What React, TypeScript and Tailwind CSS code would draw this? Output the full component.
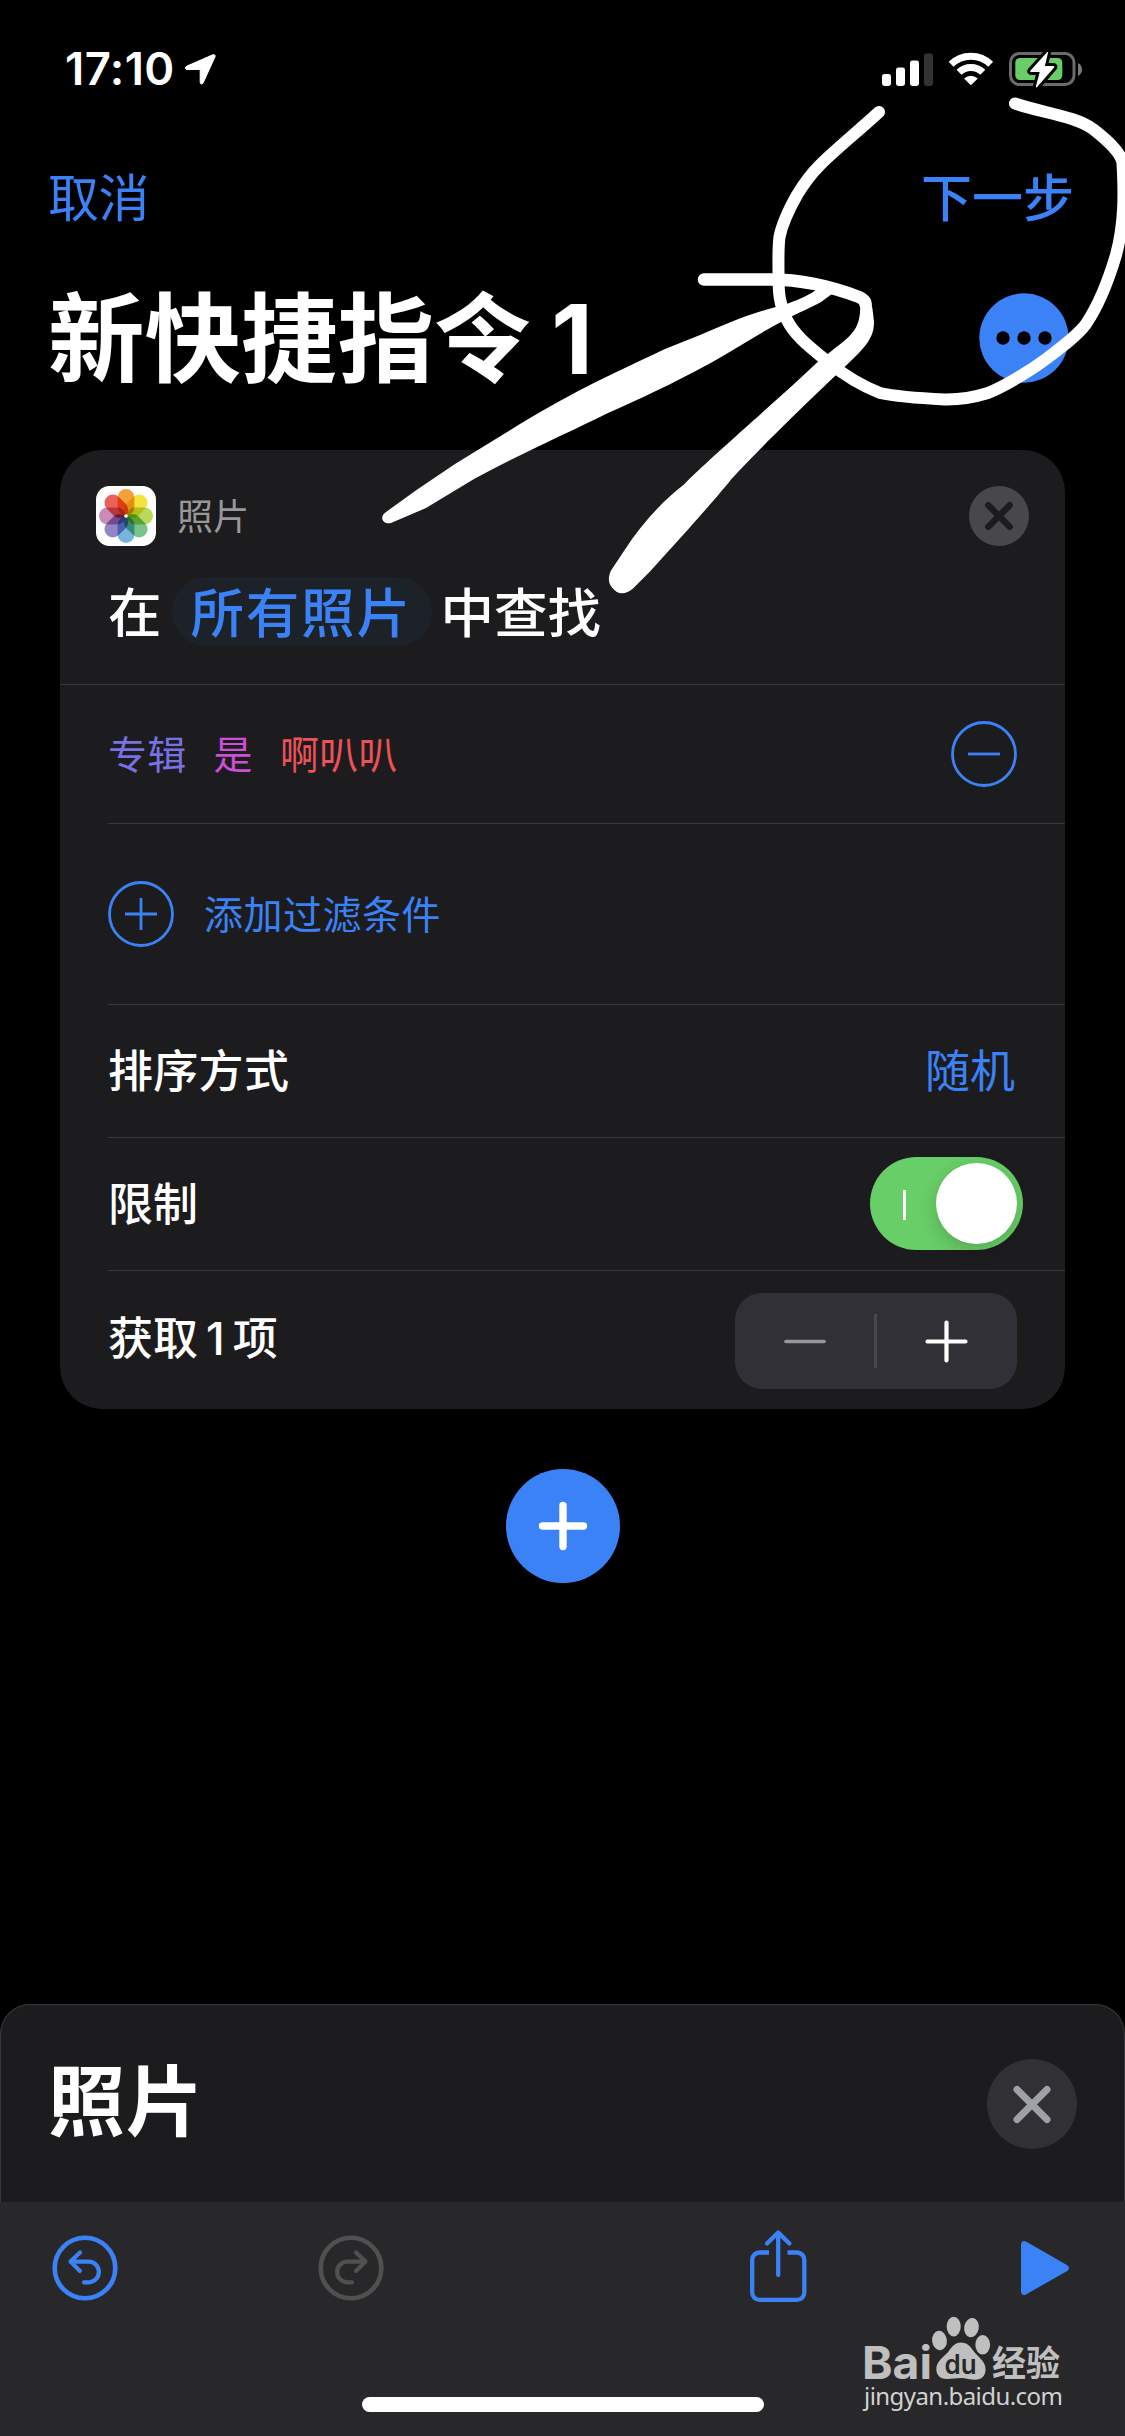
import type { ReactNode } from "react";
import clsx from "clsx";

const PETALS = [
  "#f2a03c",
  "#f3e33c",
  "#b9d85f",
  "#78c28c",
  "#78b4e0",
  "#9486c6",
  "#c98bb8",
  "#e8625a",
];

function StatusBar() {
  return (
    <div className="flex h-[138px] items-center justify-between pl-[65px] pr-[42px]">
      <div className="flex items-center gap-[11px]">
        <span className="w-[109px] whitespace-nowrap text-[45.5px] leading-none font-semibold tracking-[0.4px]">
          17:10
        </span>
        <svg width="31" height="31" viewBox="0 0 31 31" fill="#fff" stroke="#fff" strokeWidth="1" strokeLinejoin="round">
          <path d="M27.8.8 1.4 12.3C-.1 13.100.2 15.500 1.900 15.500H13.900c1 0 1.300.3 1.300 1.300V28.300c0 2 2.100 2.300 2.900.6L30.100 2.600C30.600 1.300 29.200.2 27.800.8Z" />
        </svg>
      </div>
      <div className="flex items-center">
        <svg width="51" height="33" viewBox="0 0 51 33" fill="#fff">
          <rect x="0" y="21" width="9" height="12" rx="2.4" />
          <rect x="14" y="14.500" width="9" height="18.500" rx="2.4" />
          <rect x="28" y="7.500" width="9" height="25.500" rx="2.4" />
          <rect x="42" y="0.500" width="9" height="32.500" rx="2.4" fill="#333" />
        </svg>
        <svg className="ml-[15.5px]" width="46" height="34" viewBox="0 0 46 34">
          <g fill="none" stroke="#fff" strokeWidth="7">
            <path d="M3.100 12.300a28.300 28.300 0 0 1 39.600 0" />
            <path d="M11 20.300a17 17 0 0 1 23.800 0" />
          </g>
          <path d="M22.900 33.200 16 26.400q6.900-5.300 13.800 0Z" fill="#fff" />
        </svg>
        <svg className="ml-[15px]" width="74" height="38" viewBox="0 0 74 38">
          <rect x="1.500" y="3.500" width="63.500" height="31" rx="9" fill="none" stroke="#6b6b6b" strokeWidth="3" />
          <path d="M69 13c5.300 2.500 5.300 10.500 0 13Z" fill="#7b7b7b" />
          <rect x="6.300" y="8" width="47" height="22" rx="4.500" fill="#69ce68" />
          <path
            d="M38 2.300 21.500 20.500c-.6.8-.2 1.500.7 1.500h8.500l-3.800 14.500c-.2 1 .6 1.300 1.200.6l17-19.600c.6-.8.200-1.500-.7-1.500h-8.500L39 2.700c.2-.8-.5-1-1-.4Z"
            fill="#fff"
            stroke="#000"
            strokeWidth="6"
            strokeLinejoin="round"
            paintOrder="stroke"
          />
        </svg>
      </div>
    </div>
  );
}

function PhotosIcon() {
  return (
    <svg width="60" height="60" viewBox="0 0 60 60" className="isolate">
      <rect width="60" height="60" rx="13.500" fill="#fff" />
      {PETALS.map((color, i) => (
        <rect
          key={color}
          x="21.600"
          y="3"
          width="16.800"
          height="26.500"
          rx="8.400"
          fill={color}
          className="mix-blend-multiply"
          transform={`rotate(${i * 45} 30 30)`}
        />
      ))}
      <circle cx="30" cy="30" r="1.800" fill="#fff" />
    </svg>
  );
}

function Row(props: { className?: string; last?: boolean; children: ReactNode }) {
  const { className, last, children } = props;
  return (
    <div
      className={clsx(
        "ml-12 flex items-center justify-between border-[#38383a] pr-12",
        !last && "border-b",
        className
      )}
    >
      {children}
    </div>
  );
}

function CircleSign({ plus }: { plus?: boolean }) {
  return (
    <svg width="66" height="66" viewBox="0 0 66 66" fill="none" stroke="#3b82f7" strokeWidth="2.800">
      <circle cx="33" cy="33" r="31.500" />
      <path d={plus ? "M17 33h32M33 17v32" : "M17 33h32"} />
    </svg>
  );
}

function ActionCard() {
  return (
    <div className="mx-[60px] flex h-[959px] flex-col overflow-hidden rounded-[42px] bg-[#1c1c1e]">
      <div className="h-[235px] border-b border-[#38383a] pt-9">
        <div className="flex items-center justify-between pr-9 pl-9">
          <div className="flex items-center">
            <PhotosIcon />
            <span className="mt-[2px] ml-[21px] text-[36px] leading-none tracking-[0.3px] text-[#98989b]">照片</span>
          </div>
          <svg width="60" height="60" viewBox="0 0 60 60">
            <circle cx="30" cy="30" r="30" fill="#48484a" />
            <path d="m19.300 19.300 21.400 21.400m0-21.400L19.300 40.700" stroke="#1c1c1e" strokeWidth="6.500" strokeLinecap="round" />
          </svg>
        </div>
        <div className="mt-[31px] flex h-[69px] items-center pl-12 text-[53.5px] leading-none font-medium">
          <span className="mt-[4px]">在</span>
          <span className="ml-[10px] flex h-[69px] w-[260px] items-center rounded-full bg-[#1d2229] pl-[19px] whitespace-nowrap tracking-[1.8px] text-[#3b82f7]">
            <span className="mt-[4px]">所有照片</span>
          </span>
          <span className="mt-[4px] ml-[9px]">中查找</span>
        </div>
      </div>
      <Row className="h-[139px]">
        <div className="flex gap-[27px] text-[39px] leading-none tracking-[0.3px]">
          <span className="text-[#7772e4]">专辑</span>
          <span className="text-[#cb50d8]">是</span>
          <span className="text-[#ee5258]">啊叭叭</span>
        </div>
        <CircleSign />
      </Row>
      <Row className="h-[181px]">
        <div className="flex items-center gap-[30px]">
          <CircleSign plus />
          <span className="text-[39px] leading-none tracking-[0.5px] text-[#3b82f7]">添加过滤条件</span>
        </div>
      </Row>
      <Row className="h-[133px] text-[45px] leading-none">
        <span className="font-medium tracking-[0.3px]">排序方式</span>
        <span className="mr-[2px] text-[#3b82f7]">随机</span>
      </Row>
      <Row className="h-[133px] text-[45px] leading-none">
        <span className="font-medium">限制</span>
        <div className="-mt-[2px] -mr-[6px] flex h-[93px] w-[153px] items-center justify-between rounded-full bg-[#68ce67] pr-[6px] pl-[33px]">
          <div className="mt-[4px] h-[30px] w-[3px] bg-white" />
          <div className="h-[81px] w-[81px] rounded-full bg-white shadow-[0_6px_18px_rgba(0,0,0,0.18)]" />
        </div>
      </Row>
      <Row last className="flex-1 text-[45px] leading-none">
        <span className="-mt-[4px] font-medium [word-spacing:-4px]">获取 1 项</span>
        <div className="mt-[1px] flex h-[96px] w-[282px] items-center rounded-[27px] bg-[#313036]">
          <svg className="w-[139px]" height="44" viewBox="0 0 44 44">
            <path d="M3.500 22.500h38" stroke="#98979c" strokeWidth="3.600" strokeLinecap="round" />
          </svg>
          <div className="h-[54px] w-[3px] bg-[#48474d]" />
          <svg className="w-[140px]" height="44" viewBox="0 0 44 44">
            <path d="M2.500 22.500h38M21.500 3.500v38" stroke="#fff" strokeWidth="4.200" strokeLinecap="round" />
          </svg>
        </div>
      </Row>
    </div>
  );
}

function UndoIcon(props: { color: string; flip?: boolean }) {
  return (
    <svg
      width="66"
      height="70"
      viewBox="0 0 66 70"
      fill="none"
      stroke={props.color}
      strokeWidth="4.200"
      strokeLinecap="round"
      strokeLinejoin="round"
      className={clsx(props.flip && "-scale-x-100")}
    >
      <circle cx="33" cy="35" r="30.300" strokeWidth="4.600" />
      <path d="M28 19.600 18.500 28.600l9.500 9.300M18.500 28.600H37.500a10.400 10.400 0 0 1 0 20.700H32" />
    </svg>
  );
}

function Toolbar() {
  return (
    <div className="relative flex-1 bg-[#28282a]">
      <div className="-mt-px flex h-[134px] items-center pl-[52px]">
        <UndoIcon color="#3b82f7" />
        <div className="ml-[200px]">
          <UndoIcon color="#505050" flip />
        </div>
        <svg
          className="mt-[-4px] ml-[365px]"
          width="58"
          height="74"
          viewBox="0 0 58 74"
          fill="none"
          stroke="#3b82f7"
          strokeWidth="4.300"
        >
          <path d="M20 23.500H10.500a7.300 7.300 0 0 0-7.300 7.300V63.500a7.300 7.300 0 0 0 7.300 7.300H48a7.300 7.300 0 0 0 7.300-7.300V30.800A7.300 7.300 0 0 0 48 23.500H38.500" />
          <path d="M29.200 46V4M18 14.500 29.200 3.500l11.200 11" strokeLinecap="round" strokeLinejoin="round" />
        </svg>
        <svg className="ml-[213px]" width="50" height="56" viewBox="0 0 50 56">
          <path d="M1 4.500C1 1.500 3.500.2 6 1.600L46.800 25c2.800 1.600 2.800 4.600 0 6.200L6 54.400C3.500 55.800 1 54.500 1 51.500Z" fill="#3b82f7" />
        </svg>
      </div>
      <div className="mx-auto mt-[62px] h-[15px] w-[402px] rounded-full bg-white" />
      <Watermark />
    </div>
  );
}

function Watermark() {
  return (
    <svg className="absolute top-[108px] left-[855px]" width="220" height="114" viewBox="0 0 220 114" fill="#bfbfbf">
      <text x="7" y="68.500" textLength="70" lengthAdjust="spacingAndGlyphs" className="font-['Inter'] text-[45px] font-bold">
        Bai
      </text>
      <ellipse cx="84.500" cy="30.500" rx="7.400" ry="9.700" transform="rotate(-6 84.500 30.500)" />
      <ellipse cx="98.700" cy="16.600" rx="7" ry="9.900" />
      <ellipse cx="116.500" cy="17.600" rx="7.300" ry="9.700" transform="rotate(10 116.500 17.600)" />
      <ellipse cx="127.700" cy="34.800" rx="7.400" ry="9.700" />
      <path d="M106 32.500c-6 0-9 4-12.500 9C90 46 81 51 81.300 59.500 81.600 66 86 69 92 69c5 0 9-1 14-1s9 1.800 14.500 1.800c6 0 10-4 10.100-10.300.1-8.500-8.300-13-12.100-18.500-3.500-5-6.500-8.500-12.500-8.500Z" />
      <text
        x="89.500"
        y="63.500"
        textLength="32"
        lengthAdjust="spacingAndGlyphs"
        fill="#28282a"
        className="font-['Inter'] text-[27px] font-semibold"
      >
        du
      </text>
      <text
        x="137"
        y="65.500"
        textLength="68"
        lengthAdjust="spacingAndGlyphs"
        className="font-['Noto_Sans_CJK_SC'] text-[35px] font-bold"
      >
        经验
      </text>
      <text
        x="9"
        y="94.500"
        textLength="199"
        lengthAdjust="spacing"
        fill="#d2d2d2"
        className="font-['Noto_Sans'] text-[24px]"
      >
        jingyan.baidu.com
      </text>
    </svg>
  );
}

// hand drawn circle and arrow over the header
function Scribble() {
  return (
    <svg className="pointer-events-none absolute top-0 left-0" width="1125" height="620" viewBox="0 0 1125 620" fill="#fff">
      <g fill="none" stroke="#fff" strokeWidth="12" strokeLinecap="round" strokeLinejoin="round">
        <path d="M879 112C855 134 836 149 820 165C810 175 803 185 797 195C788 211 782 224 779.500 237C778 248 778.500 262 778.500 275C778.500 292 779 304 787 320C795 336 810 347 828 362C844 375 862 386 880 393C900 397.500 925 398.500 947 399.500C960 399.500 975 397 988 393C1005 386 1030 371 1046 359C1062 347 1078 335 1086 324C1098 306 1108 282 1116 255C1125 222 1124 190 1122.500 163C1121 152 1107 140 1093 129C1075 116 1043 113 1015 103.500" />
        <path d="M704 279.500H770C800 279.500 833 287 859 297Q865 299.500 865.500 304" strokeWidth="12.500" />
      </g>
      <path d="M870 298Q873 309 874 322C874 337 868 346 844 368C825 386 760 448 731 480C718 497 672 548 650 572L633 589C626 595 618 596 612 588C608 583 608 578 611 571L625 550C641 525 662 502 684 485C706 462 787 392 816 364C848 337 862 335 860 302Z" transform="translate(0 -0.500)" />
      <path d="M386 512 416.500 490 455 464 520 424C580 388 610 375 665 349L700 335C726 324 753 312 784 305C797 300 806 297 816 290L836 291 821 302C809 309 788 316 738 347C694 374 640 399 608 413C570 432 520 454 474 479L426 508 391 523C384 525 378 518 386 512Z" />
    </svg>
  );
}

export default function App() {
  return (
    <div className="relative flex h-[2436px] w-[1125px] flex-col overflow-hidden bg-black font-['Inter','Noto_Sans_CJK_SC',sans-serif] text-white">
      <StatusBar />
      <div className="flex h-[120px] items-center justify-between pr-[51px] pl-[48px] text-[51px] leading-none text-[#3b82f7]">
        <span className="tracking-[-0.5px]">取消</span>
        <span className="font-medium">下一步</span>
      </div>
      <div className="flex h-[160px] items-center justify-between pr-14 pl-[48px]">
        <h1 className="mt-[2px] text-[96.5px] leading-none font-bold [word-spacing:-2px]">新快捷指令 1</h1>
        <svg width="90" height="90" viewBox="0 0 90 90">
          <circle cx="45" cy="45" r="44.700" fill="#3b82f7" />
          <circle cx="24" cy="45" r="6.700" />
          <circle cx="45" cy="45" r="6.700" />
          <circle cx="66" cy="45" r="6.700" />
        </svg>
      </div>
      <div className="h-8" />
      <ActionCard />
      <svg className="mx-auto mt-[60px]" width="114" height="114" viewBox="0 0 114 114">
        <circle cx="57" cy="57" r="57" fill="#3b82f7" />
        <path d="M36.500 57h41M57 36.500v41" stroke="#fff" strokeWidth="7.400" strokeLinecap="round" />
      </svg>
      <div className="mt-auto flex h-[198px] items-start justify-between rounded-t-[30px] border border-b-0 border-[#3a3a3c] bg-[#1c1c1e] pt-[54px] pr-[47px] pl-[47px]">
        <h2 className="mt-[5px] text-[77px] leading-none font-bold tracking-[1px]">照片</h2>
        <svg width="90" height="90" viewBox="0 0 90 90">
          <circle cx="45" cy="45" r="45" fill="#313035" />
          <path d="m30 30.500 30 30m0-30-30 30" stroke="#a0a0a8" strokeWidth="7" strokeLinecap="round" />
        </svg>
      </div>
      <div className="flex h-[234px]">
        <Toolbar />
      </div>
      <Scribble />
    </div>
  );
}
